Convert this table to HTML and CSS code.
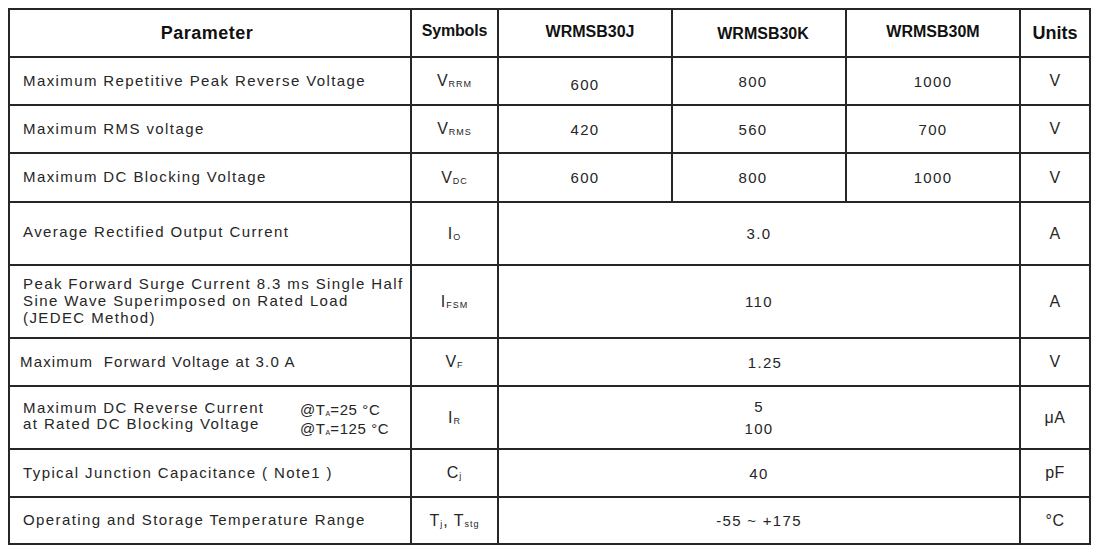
FILE: index.html
```html
<!DOCTYPE html>
<html>
<head>
<meta charset="utf-8">
<link rel="stylesheet" href="styles.css">
</head>
<body>
<table class="spec">
  <tr class="r-head">
    <th class="c-param h-param">Parameter</th>
    <th class="c-sym h-sym">Symbols</th>
    <th class="c-val h-part">WRMSB30J</th>
    <th class="c-val h-part h-k">WRMSB30K</th>
    <th class="c-val h-part h-m">WRMSB30M</th>
    <th class="c-unit h-unit">Units</th>
  </tr>
  <tr class="r-48">
    <td class="param">Maximum Repetitive Peak Reverse Voltage</td>
    <td class="sym">V<sub>RRM</sub></td>
    <td class="val v-low">600</td>
    <td class="val v-k">800</td>
    <td class="val">1000</td>
    <td class="unit">V</td>
  </tr>
  <tr class="r-48">
    <td class="param">Maximum RMS voltage</td>
    <td class="sym">V<sub>RMS</sub></td>
    <td class="val">420</td>
    <td class="val v-k">560</td>
    <td class="val">700</td>
    <td class="unit">V</td>
  </tr>
  <tr class="r-49">
    <td class="param">Maximum DC Blocking Voltage</td>
    <td class="sym">V<sub>DC</sub></td>
    <td class="val">600</td>
    <td class="val v-k">800</td>
    <td class="val">1000</td>
    <td class="unit">V</td>
  </tr>
  <tr class="r-63">
    <td class="param p-up">Average Rectified Output Current</td>
    <td class="sym">I<sub>O</sub></td>
    <td class="val" colspan="3">3.0</td>
    <td class="unit">A</td>
  </tr>
  <tr class="r-73">
    <td class="param multi">Peak Forward Surge Current 8.3 ms Single Half<br>Sine Wave Superimposed on Rated Load<br>(JEDEC Method)</td>
    <td class="sym">I<sub>FSM</sub></td>
    <td class="val" colspan="3">110</td>
    <td class="unit">A</td>
  </tr>
  <tr class="r-48">
    <td class="param p-tight">Maximum&nbsp; Forward Voltage at 3.0 A</td>
    <td class="sym">V<sub>F</sub></td>
    <td class="val v-vf" colspan="3">1.25</td>
    <td class="unit">V</td>
  </tr>
  <tr class="r-63">
    <td class="param">
      <div class="ir">
        <div class="ir-text">Maximum DC Reverse Current<br>at Rated DC Blocking Voltage</div>
        <div class="ir-cond">@T<sub class="tiny">A</sub>=25 °C<br>@T<sub class="tiny">A</sub>=125 °C</div>
      </div>
    </td>
    <td class="sym">I<sub>R</sub></td>
    <td class="val two" colspan="3">5<br>100</td>
    <td class="unit">μA</td>
  </tr>
  <tr class="r-48">
    <td class="param">Typical Junction Capacitance ( Note1 )</td>
    <td class="sym">C<sub>j</sub></td>
    <td class="val" colspan="3">40</td>
    <td class="unit">pF</td>
  </tr>
  <tr class="r-47">
    <td class="param">Operating and Storage Temperature Range</td>
    <td class="sym">T<sub>j</sub>, T<sub>stg</sub></td>
    <td class="val" colspan="3">-55 ~ +175</td>
    <td class="unit">°C</td>
  </tr>
</table>
</body>
</html>
```

FILE: styles.css
```css
html, body {
  margin: 0;
  padding: 0;
  background: #ffffff;
}

body {
  padding: 8px 0 0 8px;
  font-family: "Liberation Sans", Arial, sans-serif;
  color: #262626;
}

.spec {
  border-collapse: separate;
  border-spacing: 0;
  table-layout: fixed;
  width: 1083px;
  border-left: 2px solid #262626;
  border-top: 2px solid #262626;
}

.spec th,
.spec td {
  box-sizing: border-box;
  border-right: 2px solid #262626;
  border-bottom: 2px solid #262626;
  padding: 0;
  vertical-align: middle;
}

.spec .c-param { width: 402px; }
.spec .c-sym { width: 87px; }
.spec .c-val { width: 174px; }
.spec .c-unit { width: 70px; }

.spec .r-head th { height: 48px; }
.spec .r-47 td { height: 47px; }
.spec .r-48 td { height: 48px; }
.spec .r-49 td { height: 49px; }
.spec .r-63 td { height: 63px; }
.spec .r-73 td { height: 73px; }

.spec th {
  font-weight: bold;
  color: #111111;
  text-align: center;
}

.spec .h-param {
  font-size: 18px;
  letter-spacing: 0.5px;
  padding-right: 6px;
}

.spec .h-sym {
  font-size: 16px;
  letter-spacing: -0.2px;
  padding-bottom: 4px;
}

.spec .h-part {
  font-size: 16px;
  letter-spacing: 0;
  padding-left: 10px;
  padding-bottom: 3px;
}

.spec .h-k {
  padding-bottom: 0;
  padding-top: 2px;
  padding-left: 8px;
}

.spec .h-m {
  padding-left: 0;
}

.spec .h-unit {
  font-size: 18px;
  letter-spacing: 0;
}

.spec .param {
  font-size: 15px;
  letter-spacing: 1.4px;
  padding-left: 13px;
  text-align: left;
  white-space: nowrap;
  line-height: 17px;
  padding-bottom: 2px;
}

.spec .p-up {
  padding-bottom: 5px;
}

.spec .p-tight {
  padding-left: 10px;
  letter-spacing: 1.15px;
}

.spec .multi {
  line-height: 17px;
}

.ir {
  display: flex;
  align-items: center;
}

.ir-text {
  width: 277px;
  line-height: 16px;
  padding-bottom: 2px;
}

.ir-cond {
  line-height: 19px;
  letter-spacing: 0.6px;
  padding-top: 4px;
}

.spec .sym {
  text-align: center;
  font-size: 16px;
  letter-spacing: 1px;
  white-space: nowrap;
}

.sym sub {
  font-size: 9px;
  letter-spacing: 1px;
  vertical-align: -1px;
  line-height: 0;
}

.ir-cond sub.tiny {
  font-size: 7px;
  letter-spacing: 0;
  vertical-align: -1px;
  line-height: 0;
}

.spec .val {
  text-align: center;
  font-size: 15px;
  letter-spacing: 1.3px;
}

.spec .v-low { padding-top: 6px; }
.spec .v-k { padding-right: 12px; }
.spec .v-vf { padding-left: 12px; }

.spec .two {
  line-height: 22px;
}

.spec .unit {
  text-align: center;
  font-size: 16px;
  letter-spacing: 0.5px;
}
```
